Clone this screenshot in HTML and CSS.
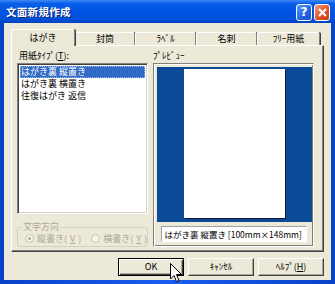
FILE: index.html
```html
<!DOCTYPE html>
<html lang="ja">
<head>
  <meta charset="UTF-8" />
  <title>文面新規作成</title>
  <link rel="stylesheet" href="styles.css">
</head>
<body>
  <div class="window">
    <div class="titlebar">
      <span class="title">文面新規作成</span>
      <div class="caption-btns">
        <span class="cap help">?</span>
        <span class="cap close">
          <svg width="9" height="9" viewBox="0 0 9 9"><path d="M1 1 L8 8 M8 1 L1 8" stroke="#fff" stroke-width="2"/></svg>
        </span>
      </div>
    </div>

    <div class="client">
      <div class="tabs">
        <div class="tab selected">はがき</div>
        <div class="tab">封筒</div>
        <div class="tab">ﾗﾍﾞﾙ</div>
        <div class="tab">名刺</div>
        <div class="tab">ﾌﾘｰ用紙</div>
      </div>

      <div class="panel">
        <div class="col-left">
          <div class="label">用紙ﾀｲﾌﾟ(<u>T</u>):</div>
          <ul class="listbox">
            <li class="sel">はがき裏 縦置き</li>
            <li>はがき裏 横置き</li>
            <li>往復はがき 返信</li>
          </ul>
          <fieldset class="group">
            <legend>文字方向</legend>
            <span class="radio"><span class="dot on"></span>縦書き(<u>V</u>)</span>
            <span class="radio"><span class="dot"></span>横書き(<u>Y</u>)</span>
          </fieldset>
        </div>

        <div class="col-right">
          <div class="label">ﾌﾟﾚﾋﾞｭｰ</div>
          <div class="preview">
            <div class="canvas"><div class="paper"></div></div>
            <div class="caption-row">
              <div class="caption">はがき裏 縦置き [100mm×148mm]</div>
            </div>
          </div>
        </div>
      </div>

      <div class="buttons">
        <button class="btn default">OK</button>
        <button class="btn">ｷｬﾝｾﾙ</button>
        <button class="btn">ﾍﾙﾌﾟ(<u>H</u>)</button>
      </div>
    </div>

    <svg class="cursor" width="13" height="20" viewBox="0 0 13 20">
      <path d="M0.5 0.5 L0.5 16 L4 12.5 L6.5 18.5 L9 17.5 L6.5 11.5 L11.5 11.5 Z" fill="#fff" stroke="#000" stroke-width="1"/>
    </svg>
  </div>
</body>
</html>
```

FILE: styles.css
```css
body {
  margin: 0;
  font-family: "Noto Sans CJK JP", "Noto Sans", sans-serif;
  font-size: 9px;
  color: #000;
}
.window {
  position: relative;
  width: 335px;
  height: 284px;
  box-sizing: border-box;
  padding: 0 4px 4px 4px;
  background: linear-gradient(to right, #0842c8, #1a5cf0 50%, #0842c8);
  display: flex;
  flex-direction: column;
}
.titlebar {
  height: 23px;
  display: flex;
  align-items: center;
  justify-content: space-between;
  margin: 0 -4px;
  padding: 0 5px 0 6px;
  background: linear-gradient(to bottom, #3d8af7 0%, #0a5fe8 15%, #0054e3 50%, #0050d8 85%, #0042c0 100%);
}
.title {
  color: #fff;
  font-weight: bold;
  font-size: 10.5px;
  letter-spacing: 0.3px;
  text-shadow: 1px 1px 0 #0a1e6e;
}
.caption-btns {
  display: flex;
  gap: 2px;
  margin-top: 1px;
}
.cap {
  width: 16px;
  height: 17px;
  box-sizing: border-box;
  border: 1px solid #fff;
  border-radius: 3px;
  display: flex;
  align-items: center;
  justify-content: center;
  color: #fff;
  font-family: "DejaVu Sans", sans-serif;
  font-weight: bold;
  font-size: 12px;
}
.help {
  background: linear-gradient(135deg, #5a9bff, #2463e6 60%, #1d50c8);
}
.close {
  background: linear-gradient(135deg, #f09a7a, #e2552c 55%, #c4380f);
}
.client {
  flex: 1;
  background: #ece9d8;
  display: flex;
  flex-direction: column;
  padding: 6px 7px 0 7px;
}
.tabs {
  display: flex;
  height: 16px;
  align-items: flex-end;
  position: relative;
  z-index: 1;
}
.tab {
  height: 13px;
  box-sizing: border-box;
  border-top: 1px solid #fff;
  border-left: 1px solid #fff;
  border-right: 1px solid #808080;
  box-shadow: 1px 0 0 #404040;
  border-radius: 2px 2px 0 0;
  background: #ece9d8;
  text-align: center;
  line-height: 12px;
}
.tab:nth-child(2) { width: 60px; border-left-color: #ece9d8; }
.tab:nth-child(3) { width: 61px; }
.tab:nth-child(4) { width: 61px; }
.tab:nth-child(5) { width: 63px; }
.tab.selected {
  width: 64px;
  height: 17px;
  margin-bottom: -1px;
  background: #ece9d8;
  line-height: 15px;
  z-index: 2;
}
.panel {
  width: 313px;
  height: 207px;
  box-sizing: border-box;
  border: 1px solid;
  border-color: #fff #404040 #404040 #fff;
  box-shadow: inset -1px -1px 0 #808080;
  display: flex;
  gap: 5px;
  padding: 3px 0 0 5px;
}
.label {
  height: 14px;
  line-height: 13px;
  padding-left: 2px;
}
.label u, .btn u, .radio u {
  text-decoration: underline;
}
.col-left {
  width: 131px;
  display: flex;
  flex-direction: column;
}
.listbox {
  margin: 0;
  padding: 2px;
  list-style: none;
  height: 151px;
  box-sizing: border-box;
  background: #fff;
  border: 1px solid;
  border-color: #808080 #fff #fff #808080;
  box-shadow: inset 1px 1px 0 #404040, inset -1px -1px 0 #d4d0c8;
}
.listbox li {
  height: 12px;
  line-height: 12px;
  padding-left: 1px;
  white-space: nowrap;
}
.listbox li.sel {
  background: #316ac5;
  color: #fff;
  outline: 1px dotted #9cb8e6;
  outline-offset: -1px;
}
.group {
  margin: 8px 0 0 0;
  height: 25px;
  box-sizing: border-box;
  border: 1px solid #d0d0bf;
  border-radius: 3px;
  padding: 0 0 0 7px;
  display: flex;
  align-items: center;
  gap: 10px;
  color: #aca899;
}
.group legend {
  padding: 0 1px;
  margin-left: -3px;
  line-height: 10px;
  color: #aca899;
}
.radio {
  display: flex;
  align-items: center;
  gap: 3px;
  white-space: nowrap;
}
.dot {
  width: 9px;
  height: 9px;
  box-sizing: border-box;
  border: 1px solid #c7c5b2;
  border-radius: 50%;
  background: #f4f3ee;
  position: relative;
}
.dot.on::after {
  content: "";
  position: absolute;
  left: 2px;
  top: 2px;
  width: 3px;
  height: 3px;
  border-radius: 50%;
  background: #aca899;
}
.col-right {
  display: flex;
  flex-direction: column;
}
.col-right .label {
  margin-left: -2px;
}
.preview {
  width: 161px;
  height: 184px;
  box-sizing: border-box;
  border: 1px solid;
  border-color: #808080 #fff #fff #808080;
  box-shadow: inset 1px 1px 0 #fff, inset -1px -1px 0 #808080;
  padding: 3px 1px 0 3px;
  display: flex;
  flex-direction: column;
}
.canvas {
  height: 155px;
  background: #0a4a97;
  display: flex;
  justify-content: center;
  padding-top: 2px;
  box-sizing: border-box;
}
.paper {
  width: 101px;
  height: 149px;
  background: #fff;
  box-shadow: 1px 1px 0 #0d1a2e;
}
.caption-row {
  flex: 1;
  display: flex;
  align-items: center;
  justify-content: center;
  padding-right: 2px;
}
.caption {
  width: 146px;
  height: 16px;
  box-sizing: border-box;
  background: #fff;
  border: 1px solid;
  border-color: #a0a0a0 #fff #fff #a0a0a0;
  line-height: 14px;
  padding-left: 3px;
  font-size: 8.5px;
  white-space: nowrap;
}
.buttons {
  display: flex;
  justify-content: flex-end;
  gap: 4px;
  margin-top: 6px;
}
.btn {
  width: 66px;
  height: 18px;
  box-sizing: border-box;
  font-family: inherit;
  font-size: 9px;
  line-height: 12px;
  padding: 0;
  background: #ece9d8;
  border: 1px solid;
  border-color: #fff #404040 #404040 #fff;
  box-shadow: inset -1px -1px 0 #aca899;
}
.btn.default {
  border: 1px solid #000;
  box-shadow: inset 1px 1px 0 #fff, inset -1px -1px 0 #404040, inset -2px -2px 0 #aca899;
}
.cursor {
  position: absolute;
  left: 170px;
  top: 263px;
}
```
